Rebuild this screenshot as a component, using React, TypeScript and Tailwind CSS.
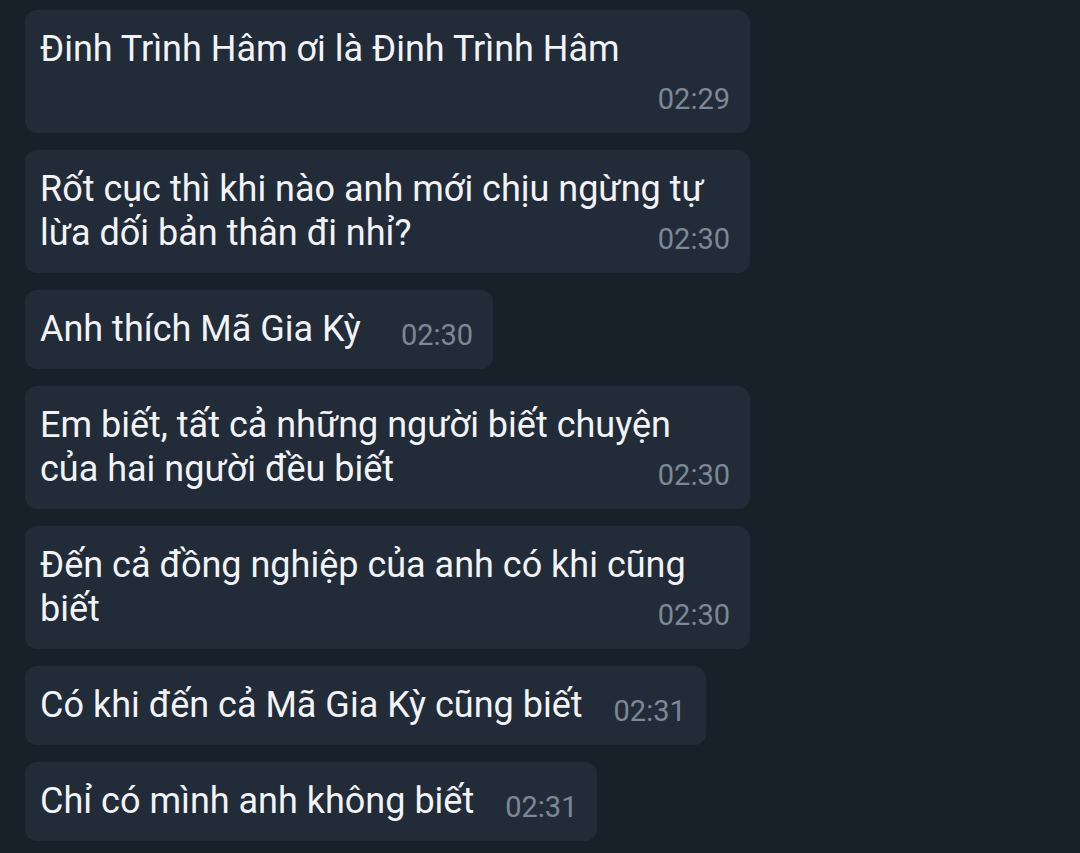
import React from 'react';

type Message = {
  lines: string[];
  time: string;
  wide: boolean;
  timeBelow?: boolean;
  gap?: string;
};

const messages: Message[] = [
  { lines: ['Đinh Trình Hâm ơi là Đinh Trình Hâm'], time: '02:29', wide: true, timeBelow: true },
  { lines: ['Rốt cục thì khi nào anh mới chịu ngừng tự', 'lừa dối bản thân đi nhỉ?'], time: '02:30', wide: true },
  { lines: ['Anh thích Mã Gia Kỳ'], time: '02:30', wide: false, gap: 'ml-[40px]' },
  { lines: ['Em biết, tất cả những người biết chuyện', 'của hai người đều biết'], time: '02:30', wide: true },
  { lines: ['Đến cả đồng nghiệp của anh có khi cũng', 'biết'], time: '02:30', wide: true },
  { lines: ['Có khi đến cả Mã Gia Kỳ cũng biết'], time: '02:31', wide: false },
  { lines: ['Chỉ có mình anh không biết'], time: '02:31', wide: false },
];

const Bubble: React.FC<{ msg: Message }> = ({ msg }) => {
  const last = msg.lines.length - 1;
  return (
    <div
      className={`${msg.wide ? 'w-[725px]' : 'w-fit'} rounded-[12px] bg-[#222c38] pl-[15px] pr-[20px] pt-[17px] pb-[18px]`}
    >
      {msg.lines.map((line, i) =>
        i === last && !msg.timeBelow ? (
          <div key={i} className="flex items-baseline justify-between h-[44px]">
            <span className="text-[36px] leading-[44px] text-[#f1f3f6] whitespace-nowrap">{line}</span>
            <span className={`${msg.gap ?? 'ml-[31px]'} text-[29px] leading-[44px] text-[#7c8896] translate-y-[4px]`}>
              {msg.time}
            </span>
          </div>
        ) : (
          <div key={i} className="text-[36px] leading-[44px] text-[#f1f3f6] h-[44px] whitespace-nowrap">
            {line}
          </div>
        )
      )}
      {msg.timeBelow && (
        <div className="flex justify-end h-[44px] items-end">
          <span className="text-[29px] leading-[36px] text-[#7c8896] translate-y-[2px]">{msg.time}</span>
        </div>
      )}
    </div>
  );
};

const App: React.FC = () => {
  return (
    <div className="w-[1080px] h-[853px] overflow-hidden bg-[#18202a] font-['Roboto',sans-serif]">
      <div className="flex flex-col gap-[17px] pl-[25px] pt-[10px]">
        {messages.map((m, i) => (
          <Bubble key={i} msg={m} />
        ))}
      </div>
    </div>
  );
};

export default App;
